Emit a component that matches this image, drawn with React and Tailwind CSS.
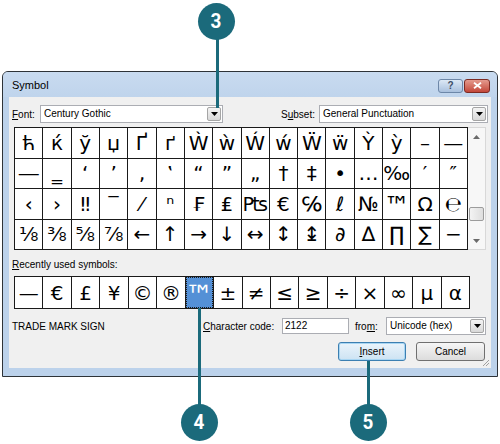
import React from "react";

const rows = [
  ["ћ","ќ","ў","џ","Ґ","ґ","Ẁ","ẁ","Ẃ","ẃ","Ẅ","ẅ","Ỳ","ỳ","–","—"],
  ["―","‗","‘","’","‚","‛","“","”","„","†","‡","•","…","‰","′","″"],
  ["‹","›","‼","‾","⁄","ⁿ","₣","₤","₧","€","℅","ℓ","№","™","Ω","℮"],
  ["⅛","⅜","⅝","⅞","←","↑","→","↓","↔","↕","↨","∂","∆","∏","∑","−"],
];
const recent = ["—","€","£","¥","©","®","™","±","≠","≤","≥","÷","×","∞","µ","α"];

function Arrow() {
  return (
    <svg width="7" height="4" viewBox="0 0 7 4">
      <path d="M0 0H7L3.5 4Z" fill="#000" />
    </svg>
  );
}

function Combo({ className, value }) {
  return (
    <div className={"flex h-[18px] border border-[#abadb3] bg-white " + className}>
      <span className="flex-1 pl-[3px] text-[10px] leading-[16px] text-black">{value}</span>
      <span className="m-px flex w-[14px] items-center justify-center rounded-[2px] border border-[#a5a5a5] bg-linear-to-b from-[#f4f4f4] to-[#d8d8d8]">
        <Arrow />
      </span>
    </div>
  );
}

function Callout({ n, className }) {
  return (
    <div className={"absolute flex h-[37px] w-[37px] items-center justify-center rounded-full bg-[#1b6a7b] font-['Roboto',sans-serif] text-[21px] font-bold leading-none text-white " + className}>
      <span className="scale-x-90">{n}</span>
    </div>
  );
}

export default function App() {
  return (
    <div className="relative h-[444px] w-[500px] overflow-hidden bg-white pl-[2px] pt-[71px] font-['Liberation_Sans',Arial,sans-serif] text-black">
      {/* Dialog window */}
      <div className="flex h-[306px] w-[496px] flex-col rounded-t-[6px] border border-[#2e3338] bg-[#bcd2eb]">
        {/* Title bar */}
        <div className="flex h-[25px] items-center justify-between rounded-t-[5px] bg-linear-to-b from-[#c9dbf0] to-[#bfd4ec] pl-[9px] pr-[7px] pt-[2px]">
          <span className="text-[11px]">Symbol</span>
          <div className="flex gap-[1px]">
            <div className="flex h-[14px] w-[25px] items-center justify-center rounded-[3px] border border-[#6d87a8] bg-linear-to-b from-[#dce8f5] to-[#a9c0dd] text-[10px] font-bold leading-none text-[#3d4e66]">
              ?
            </div>
            <div className="flex h-[14px] w-[26px] items-center justify-center rounded-[3px] border border-[#7d2a22] bg-linear-to-b from-[#e49a8e] to-[#c2463a]">
              <svg width="9" height="7" viewBox="0 0 9 7">
                <path d="M1 0.8L8 6.2M8 0.8L1 6.2" stroke="#fff" strokeWidth="1.8" />
              </svg>
            </div>
          </div>
        </div>

        {/* Client area */}
        <div className="relative mx-[6px] flex h-[271px] flex-col bg-[#f0f0f0] px-[3px] text-[10px]">
          {/* Font row */}
          <div className="mt-[8px] flex h-[18px] items-center">
            <span className="w-[28px]"><span className="underline">F</span>ont:</span>
            <Combo className="w-[183px]" value="Century Gothic" />
            <span className="ml-auto mr-[4px]">S<span className="underline">u</span>bset:</span>
            <Combo className="w-[169px]" value="General Punctuation" />
          </div>

          {/* Symbol grid */}
          <div className="ml-[2px] mt-[4px] flex h-[123px] w-[472px]">
            <div className="grid w-[454px] grid-cols-[repeat(16,minmax(0,1fr))] grid-rows-[repeat(4,minmax(0,1fr))] border-l border-t border-[#1a1a1a] bg-white font-['DejaVu_Sans',sans-serif] text-[20px] leading-none">
              {rows.flat().map((c, i) => (
                <div
                  key={i}
                  className="flex items-center justify-center border-b border-r border-[#1a1a1a]"
                >
                  {c === "™" ? <span className="translate-y-[2px] text-[26px]">™</span> : c}
                </div>
              ))}
            </div>
            <div className="flex w-[18px] flex-col border-y border-r border-[#d8d8d8] bg-[#f7f7f7]">
              <div className="flex h-[17px] items-center justify-center">
                <svg width="7" height="4" viewBox="0 0 7 4"><path d="M0 4H7L3.5 0Z" fill="#6a6a6a" /></svg>
              </div>
              <div className="flex-1 px-[1px] pt-[62px]">
                <div className="h-[14px] rounded-[2px] border border-[#9c9c9c] bg-linear-to-r from-[#f3f3f3] to-[#dedede]" />
              </div>
              <div className="flex h-[17px] items-center justify-center">
                <svg width="7" height="4" viewBox="0 0 7 4"><path d="M0 0H7L3.5 4Z" fill="#6a6a6a" /></svg>
              </div>
            </div>
          </div>

          {/* Recently used */}
          <div className="mt-[9px] h-[12px] leading-[12px]">
            <span className="underline">R</span>ecently used symbols:
          </div>
          <div className="ml-[2px] mt-[5px] grid h-[33px] w-[456px] grid-cols-[repeat(16,minmax(0,1fr))] border-l border-t border-[#1a1a1a] bg-white font-['DejaVu_Sans',sans-serif] text-[20px] leading-none">
            {recent.map((c, i) => (
              <div key={i} className="flex items-center justify-center border-b border-r border-[#1a1a1a]">
                {c === "™" ? (
                  <div className="flex h-full w-full items-center justify-center border border-dotted border-[#1a1a1a] bg-[#5490d6] text-white">
                    <span className="translate-y-[3px] text-[28px] leading-[20px]">™</span>
                  </div>
                ) : (
                  c
                )}
              </div>
            ))}
          </div>

          {/* Name + character code row */}
          <div className="mt-[9px] flex h-[16px] items-center">
            <span className="w-[191px]">TRADE MARK SIGN</span>
            <span className="w-[79px]"><span className="underline">C</span>haracter code:</span>
            <div className="h-[16px] w-[67px] border border-[#abadb3] bg-white pl-[2px] leading-[14px]">2122</div>
            <span className="ml-[6px] w-[31px]">fro<span className="underline">m</span>:</span>
            <Combo className="w-[100px]" value="Unicode (hex)" />
          </div>

          {/* Buttons */}
          <div className="mt-[8px] flex h-[19px] justify-end gap-[10px] pr-[3px]">
            <div className="flex w-[68px] items-center justify-center rounded-[3px] border border-[#3c7fb1] bg-linear-to-b from-[#eaf4fb] to-[#cde3f3] shadow-[inset_0_0_0_1px_#a8d6f3]">
              <span className="underline">I</span>nsert
            </div>
            <div className="flex w-[69px] items-center justify-center rounded-[3px] border border-[#707070] bg-linear-to-b from-[#f6f6f6] to-[#dcdcdc]">
              Cancel
            </div>
          </div>

          {/* Resize grip */}
          <svg className="absolute bottom-[1px] right-[1px]" width="8" height="8" viewBox="0 0 8 8">
            <path d="M7 1L1 7M7 4L4 7" stroke="#a0a0a0" strokeWidth="1" />
          </svg>
        </div>
      </div>

      {/* Callouts */}
      <div className="absolute left-[215.5px] top-[36px] h-[72px] w-[3px] bg-[#1b6a7b]" />
      <Callout n="3" className="left-[198px] top-[3px]" />

      <div className="absolute left-[198px] top-[308px] h-[98px] w-[3px] bg-[#1b6a7b]" />
      <Callout n="4" className="left-[181px] top-[404px]" />

      <div className="absolute left-[367px] top-[361px] h-[45px] w-[3px] bg-[#1b6a7b]" />
      <Callout n="5" className="left-[350px] top-[404px]" />
    </div>
  );
}
